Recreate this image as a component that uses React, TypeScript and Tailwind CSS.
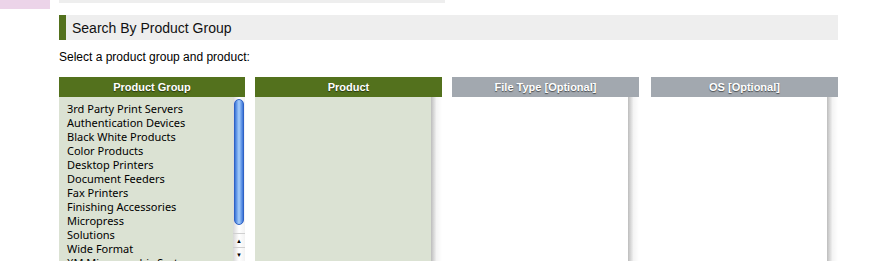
import React from "react";

const groups = [
  "3rd Party Print Servers",
  "Authentication Devices",
  "Black White Products",
  "Color Products",
  "Desktop Printers",
  "Document Feeders",
  "Fax Printers",
  "Finishing Accessories",
  "Micropress",
  "Solutions",
  "Wide Format",
  "XM Micrographic Systems",
];

function Track({ children }: { children?: React.ReactNode }) {
  return (
    <div className="relative w-[11px] shrink-0 bg-gradient-to-r from-[#bdbdbd] via-[#f4f4f4] to-white">
      {children}
    </div>
  );
}

function GroupScrollbar() {
  return (
    <div className="flex w-[12px] shrink-0 flex-col bg-gradient-to-r from-[#d8d8d8] via-white to-[#f2f2f2]">
      <div className="mx-[1px] mt-[2px] h-[126px] rounded-full border border-[#2f62c4] bg-gradient-to-r from-[#3b74d8] via-[#a8cffb] to-[#3b74d8]" />
      <div className="h-[8px]" />
      <div className="flex h-[14px] items-center justify-center border-t border-[#d0d0d0] text-[6px] leading-none text-black">
        ▲
      </div>
      <div className="flex h-[14px] items-center justify-center border-t border-[#d0d0d0] text-[6px] leading-none text-black">
        ▼
      </div>
    </div>
  );
}

function Column({
  title,
  green,
  width,
  children,
  scrollbar,
}: {
  title: string;
  green?: boolean;
  width: string;
  children?: React.ReactNode;
  scrollbar: React.ReactNode;
}) {
  return (
    <div className={`${width} shrink-0`}>
      <div
        className={`flex h-[20px] items-center justify-center text-[11px] font-bold text-white [text-shadow:0_1px_1px_rgba(0,0,0,0.55)] ${
          green ? "bg-[#53711d]" : "bg-[#a2a8af]"
        }`}
      >
        {title}
      </div>
      <div className={`flex h-[164px] overflow-hidden ${green ? "bg-[#dbe2d3]" : "bg-white"}`}>
        <div className="flex-1 overflow-hidden pl-[8px] pt-[5px]">{children}</div>
        {scrollbar}
      </div>
    </div>
  );
}

export default function App() {
  return (
    <div className="relative h-[271px] w-[885px] overflow-hidden bg-white font-['Liberation_Sans',Arial,sans-serif] text-[#111]">
      <div className="flex">
        <div className="h-[9px] w-[50px] bg-[#ecd4e9]" />
        <div className="ml-[9px] h-[3px] w-[386px] bg-[#eeeeee]" />
      </div>

      <div className="ml-[59px] w-[779px] pt-[6px]">
        <div className="flex h-[25px] items-center bg-[#eeeeee]">
          <div className="h-full w-[7px] bg-[#53711d]" />
          <span className="ml-[6px] text-[14px] leading-none text-[#111]">Search By Product Group</span>
        </div>

        <p className="mt-[10px] text-[12px] leading-[14px] text-black">Select a product group and product:</p>

        <div className="mt-[13px] flex">
          <Column title="Product Group" green width="w-[186px]" scrollbar={<GroupScrollbar />}>
            {groups.map((g) => (
              <div
                key={g}
                className="h-[14px] whitespace-nowrap font-['Noto_Sans',sans-serif] text-[11px] leading-[14px] text-black"
              >
                {g}
              </div>
            ))}
          </Column>
          <div className="w-[10px] shrink-0" />
          <Column title="Product" green width="w-[187px]" scrollbar={<Track />} />
          <div className="w-[10px] shrink-0" />
          <Column title="File Type [Optional]" width="w-[187px]" scrollbar={<Track />} />
          <div className="w-[12px] shrink-0" />
          <Column title="OS [Optional]" width="w-[187px]" scrollbar={<Track />} />
        </div>
      </div>
    </div>
  );
}
